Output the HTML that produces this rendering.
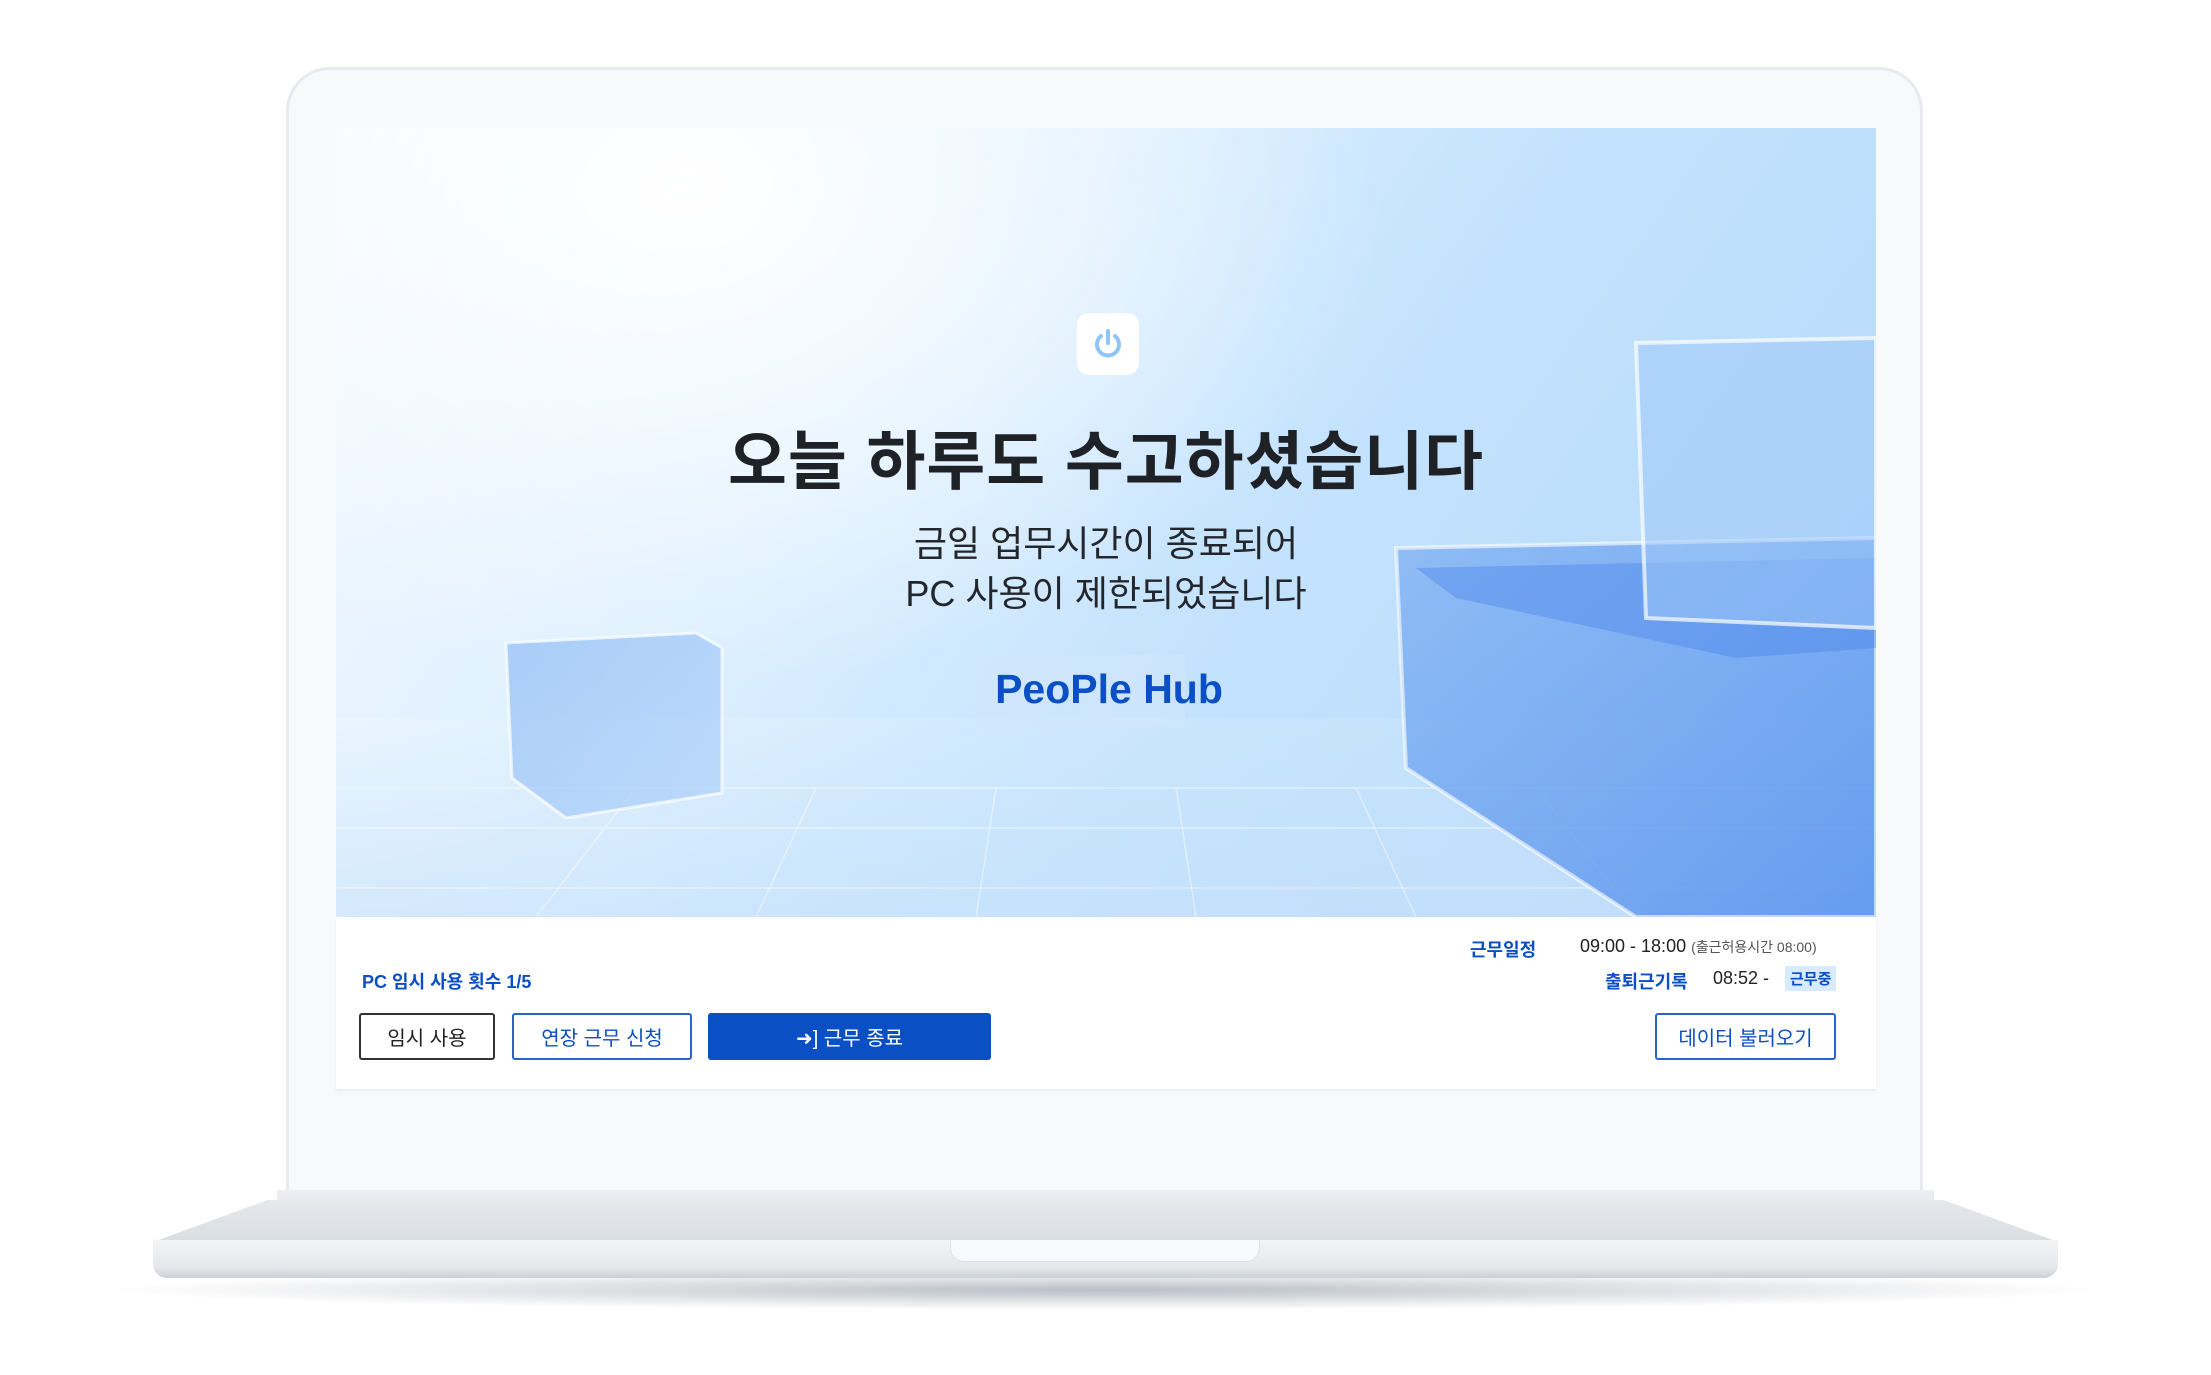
<!DOCTYPE html>
<html><head><meta charset="utf-8"><style>
*{margin:0;padding:0;box-sizing:border-box}
body{width:2211px;height:1375px;background:#fff;position:relative;overflow:hidden;font-family:"Liberation Sans","Noto Sans CJK KR",sans-serif}
.abs{position:absolute}
.lid{left:286px;top:67px;width:1637px;height:1140px;border-radius:44px 44px 0 0;background:#f8f9fb;border:3px solid #e8eaef;border-bottom:none}
.screen{left:336px;top:128px;width:1540px;height:789px;overflow:hidden;
background:radial-gradient(ellipse 700px 500px at 350px 60px,#ffffff 0%,rgba(255,255,255,0.6) 40%,rgba(255,255,255,0) 100%),linear-gradient(125deg,#f4f9ff 0%,#dcefff 35%,#c3e2fd 60%,#b4d9fb 100%)}
.panel{left:336px;top:917px;width:1540px;height:172px;background:#fff;box-shadow:0 2px 3px rgba(0,0,0,0.06)}
.btn{position:absolute;top:1013px;height:47px;border-radius:3px;font-size:20px;display:flex;align-items:center;justify-content:center;background:#fff}
.blue{color:#0b4fc4}
</style></head><body>
<div class="abs" style="left:100px;top:1270px;width:2010px;height:40px;background:radial-gradient(ellipse at center,rgba(60,70,90,0.35),rgba(0,0,0,0) 70%)"></div>
<div class="abs lid"></div>
<div class="abs screen">
 <div class="abs" style="left:0;top:590px;width:1540px;height:199px;background:linear-gradient(180deg,rgba(255,255,255,0.1),rgba(200,225,250,0.5));"></div>
 <svg class="abs" style="left:0;top:0" width="1540" height="789">
  <defs>
   <linearGradient id="rb" x1="0" y1="0" x2="1" y2="1"><stop offset="0" stop-color="#7fb0f2" stop-opacity="0.75"/><stop offset="1" stop-color="#5c95ee" stop-opacity="0.9"/></linearGradient>
   <linearGradient id="lc" x1="0" y1="0" x2="1" y2="1"><stop offset="0" stop-color="#8ebcf5" stop-opacity="0.7"/><stop offset="1" stop-color="#a9cdf8" stop-opacity="0.6"/></linearGradient>
  </defs>
  <g stroke="rgba(255,255,255,0.45)" stroke-width="1.5" fill="none">
   <line x1="0" y1="660" x2="1540" y2="660"/><line x1="0" y1="700" x2="1540" y2="700"/><line x1="0" y1="760" x2="1540" y2="760"/>
   <line x1="300" y1="660" x2="200" y2="789"/><line x1="480" y1="660" x2="420" y2="789"/><line x1="660" y1="660" x2="640" y2="789"/><line x1="840" y1="660" x2="860" y2="789"/><line x1="1020" y1="660" x2="1080" y2="789"/><line x1="1200" y1="660" x2="1300" y2="789"/>
  </g>
  <polygon points="170,515 360,505 386,520 386,665 230,690 176,650" fill="url(#lc)" stroke="rgba(255,255,255,0.7)" stroke-width="3"/>
  <polygon points="1060,420 1540,410 1540,789 1300,789 1070,640" fill="url(#rb)" stroke="rgba(255,255,255,0.6)" stroke-width="4"/>
  <polygon points="1080,440 1540,430 1540,520 1400,530 1120,470" fill="rgba(70,130,235,0.4)"/>
  <polygon points="1300,215 1540,210 1540,500 1310,490" fill="rgba(160,200,248,0.55)" stroke="rgba(255,255,255,0.7)" stroke-width="4"/>
 </svg>
 <div class="abs" style="left:741px;top:185px;width:62px;height:62px;border-radius:12px;background:#fff;display:flex;align-items:center;justify-content:center">
  <svg width="36" height="36" viewBox="0 0 36 36" fill="none" stroke="#8ec5f5" stroke-width="4" stroke-linecap="round"><path d="M11 10a11 11 0 1 0 14 0"/><line x1="18" y1="5" x2="18" y2="17"/></svg>
 </div>
 <div class="abs" style="left:0;top:283px;width:1540px;text-align:center;font-size:64px;font-weight:bold;color:#1e2126;letter-spacing:1px">오늘 하루도 수고하셨습니다</div>
 <div class="abs" style="left:0;top:391px;width:1540px;text-align:center;font-size:36px;line-height:50px;color:#23262b">금일 업무시간이 종료되어<br>PC 사용이 제한되었습니다</div>
 <div class="abs" style="left:639px;top:527px;width:210px;height:72px;background:rgba(210,230,252,0.6)"></div>
 <div class="abs" style="left:0;top:538px;width:1540px;text-align:center;font-size:41px;font-weight:bold;color:#0b4fc4;padding-left:6px">PeoPle Hub</div>
</div>
<div class="abs panel"></div>
<div class="abs blue" style="left:1470px;top:936px;font-size:18px;font-weight:bold">근무일정</div>
<div class="abs" style="left:1580px;top:936px;font-size:18px;color:#222">09:00 - 18:00 <span style="font-size:14px;color:#555">(출근허용시간 08:00)</span></div>
<div class="abs blue" style="left:1605px;top:968px;font-size:18px;font-weight:bold">출퇴근기록</div>
<div class="abs" style="left:1713px;top:968px;font-size:18px;color:#222">08:52 -</div>
<div class="abs blue" style="left:1785px;top:966px;padding:2px 5px;background:#d6ebff;font-size:15px;font-weight:bold">근무중</div>
<div class="abs blue" style="left:362px;top:968px;font-size:18px;font-weight:bold">PC 임시 사용 횟수 1/5</div>
<div class="btn" style="left:359px;width:136px;border:2px solid #333;color:#222">임시 사용</div>
<div class="btn blue" style="left:512px;width:180px;border:2px solid #2b63c9">연장 근무 신청</div>
<div class="btn" style="left:708px;width:283px;background:#0b4fc4;color:#fff;border:none">➜] 근무 종료</div>
<div class="btn blue" style="left:1655px;width:181px;border:2px solid #2b63c9">데이터 불러오기</div>
<div class="abs" style="left:277px;top:1190px;width:1657px;height:52px;background:linear-gradient(180deg,#eceef2,#dfe2e7)"></div>
<div class="abs" style="left:153px;top:1200px;width:1905px;height:42px;background:linear-gradient(180deg,#e6e8ec,#dadde2);clip-path:polygon(6% 0,94% 0,100% 100%,0 100%)"></div>
<div class="abs" style="left:153px;top:1240px;width:1905px;height:38px;border-radius:0 0 14px 14px;background:linear-gradient(180deg,#f2f4f6,#e6e8ec 70%,#cdd1d7)"></div>
<div class="abs" style="left:950px;top:1240px;width:310px;height:22px;border-radius:0 0 14px 14px;background:#f8f9fb;border:1px solid #dde0e5;border-top:none"></div>
</body></html>
